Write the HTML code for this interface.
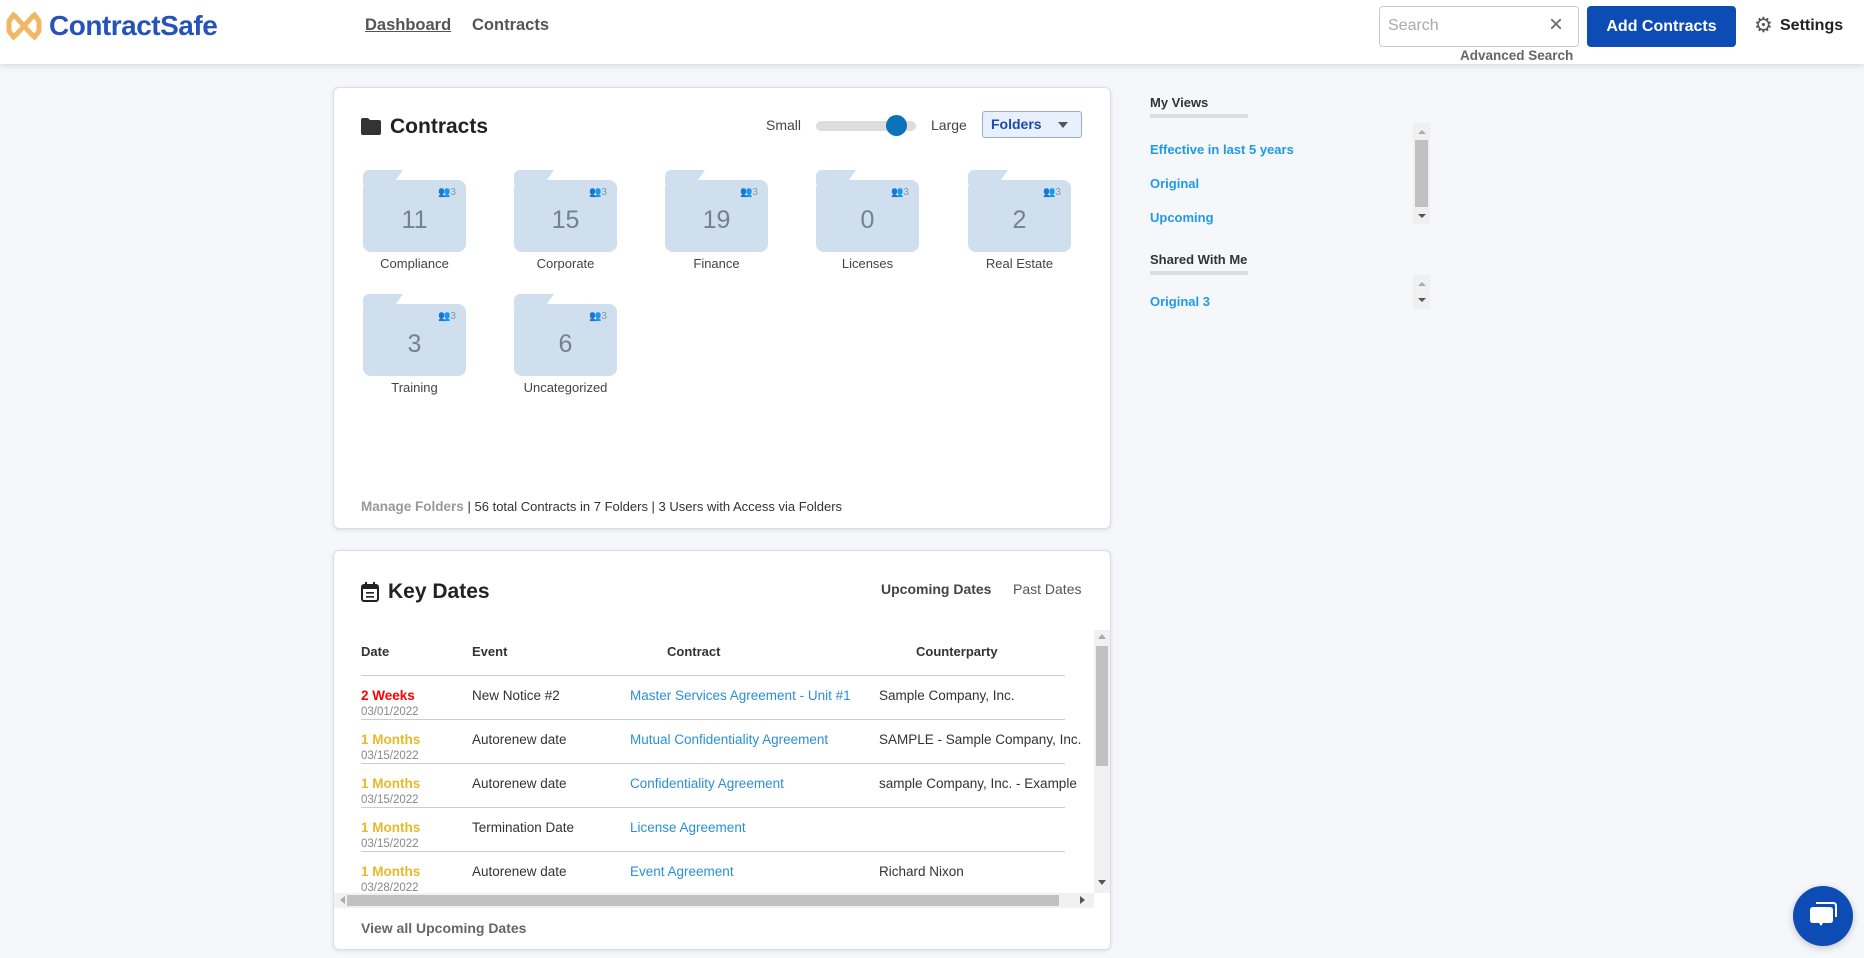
<!DOCTYPE html>
<html><head><meta charset="utf-8"><style>
*{box-sizing:border-box;margin:0;padding:0}
body{width:1864px;height:958px;overflow:hidden;background:#f6f7fb;font-family:"Liberation Sans",sans-serif;color:#333;position:relative}
.a{position:absolute;white-space:nowrap}
.hdr{position:absolute;left:0;top:0;width:1864px;height:64px;background:#fff;box-shadow:0 2px 6px rgba(0,0,0,.12)}
.card{position:absolute;background:#fff;border:1px solid #dcdde3;border-radius:6px;box-shadow:0 1px 4px rgba(0,0,0,.1)}
.fold{position:absolute;width:103px;height:82px}
.fold .tab{position:absolute;left:0;top:0;width:30px;height:14px;background:#cfdfed;border-radius:6px 0 0 0}
.fold .tab:after{content:"";position:absolute;right:-10px;top:0;border-left:10px solid #cfdfed;border-top:0;border-bottom:14px solid transparent;}
.fold .body{position:absolute;left:0;top:10px;width:103px;height:72px;background:#cfdfed;border-radius:8px}
.fold .n{position:absolute;left:0;width:103px;top:36px;text-align:center;font-size:25px;color:#76818c}
.fold .u{position:absolute;right:10px;top:17px;font-size:10px;color:#8a949e}
.lbl{position:absolute;width:151px;text-align:center;font-size:13px;color:#444}
.th{font-size:13px;font-weight:bold;color:#333}
.td{font-size:13.5px;color:#333}
.lnk{color:#2a8fd8}
.hl{position:absolute;left:361px;width:704px;height:1px;background:#ccc}
</style></head><body>
<div class="hdr"></div>
<svg class="a" style="left:6px;top:9px" width="36" height="34" viewBox="0 0 36 34"><g fill="none" stroke="#f0b865" stroke-width="5"><path d="M9 4 L3 12 L3 22 L9 30"/><path d="M27 4 L33 12 L33 22 L27 30"/><path d="M8 6 L28 28"/><path d="M28 6 L8 28"/></g></svg>
<div class="a" style="left:49px;top:10px;font-size:28px;font-weight:bold;color:#2553b8;letter-spacing:-0.5px">ContractSafe</div>
<div class="a" style="left:365px;top:16px;font-size:16.5px;font-weight:bold;color:#555;text-decoration:underline">Dashboard</div>
<div class="a" style="left:472px;top:16px;font-size:16.5px;font-weight:bold;color:#555">Contracts</div>
<div class="a" style="left:1379px;top:6px;width:200px;height:41px;border:1px solid #ccc;border-radius:4px;background:#fff"></div>
<div class="a" style="left:1388px;top:17px;font-size:16px;color:#aaa">Search</div>
<div class="a" style="left:1549px;top:11px;font-size:24px;color:#666">×</div>
<div class="a" style="left:1460px;top:48px;font-size:13.5px;font-weight:bold;color:#666">Advanced Search</div>
<div class="a" style="left:1587px;top:6px;width:149px;height:41px;background:#0d4bb5;border-radius:4px;color:#fff;font-size:16px;font-weight:bold;text-align:center;line-height:41px">Add Contracts</div>
<div class="a" style="left:1754px;top:13px;font-size:21px;color:#555">⚙</div>
<div class="a" style="left:1780px;top:17px;font-size:16px;font-weight:bold;color:#222">Settings</div>

<div class="card" style="left:333px;top:87px;width:778px;height:442px"></div>
<svg class="a" style="left:361px;top:118px" width="20" height="17" viewBox="0 0 20 17"><path d="M0 2 Q0 0 2 0 H7 L9 2 H18 Q20 2 20 4 V15 Q20 17 18 17 H2 Q0 17 0 15Z" fill="#333"/></svg>
<div class="a" style="left:390px;top:115px;font-size:21px;font-weight:bold;color:#222">Contracts</div>
<div class="a" style="left:766px;top:117px;font-size:14px;color:#444">Small</div>
<div class="a" style="left:816px;top:121px;width:100px;height:10px;background:#ddd;border-radius:5px"></div>
<div class="a" style="left:886px;top:115px;width:21px;height:21px;background:#0b73b8;border-radius:50%"></div>
<div class="a" style="left:931px;top:117px;font-size:14px;color:#444">Large</div>
<div class="a" style="left:982px;top:111px;width:100px;height:27px;background:#e8effd;border:1px solid #99acd0;border-radius:3px"></div>
<div class="a" style="left:991px;top:116px;font-size:14px;font-weight:bold;color:#1a4ab0">Folders</div>
<div class="a" style="left:1058px;top:122px;border-left:5px solid transparent;border-right:5px solid transparent;border-top:6px solid #555"></div>

<div class="fold" style="left:363px;top:170px"><div class="tab"></div><div class="body"></div><div class="u">👥3</div><div class="n">11</div></div>
<div class="fold" style="left:514px;top:170px"><div class="tab"></div><div class="body"></div><div class="u">👥3</div><div class="n">15</div></div>
<div class="fold" style="left:665px;top:170px"><div class="tab"></div><div class="body"></div><div class="u">👥3</div><div class="n">19</div></div>
<div class="fold" style="left:816px;top:170px"><div class="tab"></div><div class="body"></div><div class="u">👥3</div><div class="n">0</div></div>
<div class="fold" style="left:968px;top:170px"><div class="tab"></div><div class="body"></div><div class="u">👥3</div><div class="n">2</div></div>
<div class="fold" style="left:363px;top:294px"><div class="tab"></div><div class="body"></div><div class="u">👥3</div><div class="n">3</div></div>
<div class="fold" style="left:514px;top:294px"><div class="tab"></div><div class="body"></div><div class="u">👥3</div><div class="n">6</div></div>
<div class="lbl" style="left:339px;top:256px">Compliance</div>
<div class="lbl" style="left:490px;top:256px">Corporate</div>
<div class="lbl" style="left:641px;top:256px">Finance</div>
<div class="lbl" style="left:792px;top:256px">Licenses</div>
<div class="lbl" style="left:944px;top:256px">Real Estate</div>
<div class="lbl" style="left:339px;top:380px">Training</div>
<div class="lbl" style="left:490px;top:380px">Uncategorized</div>
<div class="a" style="left:361px;top:499px;font-size:13.5px;color:#999;font-weight:bold">Manage Folders <span style="font-weight:normal;color:#333;font-size:13px">| 56 total Contracts in 7 Folders | 3 Users with Access via Folders</span></div>

<div class="card" style="left:333px;top:550px;width:778px;height:400px"></div>
<svg class="a" style="left:361px;top:582px" width="18" height="20" viewBox="0 0 18 20"><rect x="1" y="3" width="16" height="16" rx="2" fill="none" stroke="#222" stroke-width="2"/><rect x="1" y="3" width="16" height="4" fill="#222"/><rect x="4" y="0" width="2" height="4" fill="#222"/><rect x="12" y="0" width="2" height="4" fill="#222"/><rect x="5" y="10" width="8" height="1.6" fill="#222"/><rect x="5" y="14" width="8" height="1.6" fill="#222"/></svg>
<div class="a" style="left:388px;top:580px;font-size:21px;font-weight:bold;color:#222">Key Dates</div>
<div class="a" style="left:881px;top:581px;font-size:14px;font-weight:bold;color:#444">Upcoming Dates</div>
<div class="a" style="left:1013px;top:581px;font-size:14px;color:#555">Past Dates</div>
<div class="a th" style="left:361px;top:644px">Date</div>
<div class="a th" style="left:472px;top:644px">Event</div>
<div class="a th" style="left:667px;top:644px">Contract</div>
<div class="a th" style="left:916px;top:644px">Counterparty</div>
<div class="hl" style="top:675px"></div>
<div class="hl" style="top:719px"></div>
<div class="hl" style="top:763px"></div>
<div class="hl" style="top:807px"></div>
<div class="hl" style="top:851px"></div>

<div class="a" style="left:361px;top:688px;font-size:13.5px;font-weight:bold;color:#f00">2 Weeks</div>
<div class="a" style="left:361px;top:706px;font-size:11.5px;color:#888">03/01/2022</div>
<div class="a td" style="left:472px;top:688px">New Notice #2</div>
<div class="a td lnk" style="left:630px;top:688px">Master Services Agreement - Unit #1</div>
<div class="a td" style="left:879px;top:688px">Sample Company, Inc.</div>

<div class="a" style="left:361px;top:732px;font-size:13.5px;font-weight:bold;color:#e8b92b">1 Months</div>
<div class="a" style="left:361px;top:750px;font-size:11.5px;color:#888">03/15/2022</div>
<div class="a td" style="left:472px;top:732px">Autorenew date</div>
<div class="a td lnk" style="left:630px;top:732px">Mutual Confidentiality Agreement</div>
<div class="a td" style="left:879px;top:732px">SAMPLE - Sample Company, Inc.</div>

<div class="a" style="left:361px;top:776px;font-size:13.5px;font-weight:bold;color:#e8b92b">1 Months</div>
<div class="a" style="left:361px;top:794px;font-size:11.5px;color:#888">03/15/2022</div>
<div class="a td" style="left:472px;top:776px">Autorenew date</div>
<div class="a td lnk" style="left:630px;top:776px">Confidentiality Agreement</div>
<div class="a td" style="left:879px;top:776px">sample Company, Inc. - Example</div>

<div class="a" style="left:361px;top:820px;font-size:13.5px;font-weight:bold;color:#e8b92b">1 Months</div>
<div class="a" style="left:361px;top:838px;font-size:11.5px;color:#888">03/15/2022</div>
<div class="a td" style="left:472px;top:820px">Termination Date</div>
<div class="a td lnk" style="left:630px;top:820px">License Agreement</div>

<div style="position:absolute;left:334px;top:850px;width:760px;height:43px;overflow:hidden">
<div class="a" style="left:27px;top:14px;font-size:13.5px;font-weight:bold;color:#e8b92b">1 Months</div>
<div class="a" style="left:27px;top:32px;font-size:11.5px;color:#888">03/28/2022</div>
<div class="a td" style="left:138px;top:14px">Autorenew date</div>
<div class="a td lnk" style="left:296px;top:14px">Event Agreement</div>
<div class="a td" style="left:545px;top:14px">Richard Nixon</div>
</div>
<div class="a" style="left:1094px;top:630px;width:16px;height:263px;background:#f1f1f1"></div>
<div class="a" style="left:1096px;top:646px;width:12px;height:120px;background:#c1c1c1"></div>
<div class="a" style="left:1098px;top:634px;border-left:4px solid transparent;border-right:4px solid transparent;border-bottom:5px solid #aaa"></div>
<div class="a" style="left:1098px;top:880px;border-left:4px solid transparent;border-right:4px solid transparent;border-top:5px solid #555"></div>
<div class="a" style="left:334px;top:893px;width:760px;height:15px;background:#f1f1f1"></div>
<div class="a" style="left:347px;top:895px;width:712px;height:11px;background:#c1c1c1"></div>
<div class="a" style="left:1080px;top:896px;border-top:4px solid transparent;border-bottom:4px solid transparent;border-left:5px solid #555"></div>
<div class="a" style="left:340px;top:896px;border-top:4px solid transparent;border-bottom:4px solid transparent;border-right:5px solid #aaa"></div>
<div class="a" style="left:361px;top:920px;font-size:14px;font-weight:bold;color:#666">View all Upcoming Dates</div>

<div class="a" style="left:1150px;top:95px;font-size:13px;font-weight:bold;color:#333">My Views</div>
<div class="a" style="left:1150px;top:114px;width:98px;height:4px;background:#ddd"></div>
<div class="a" style="left:1150px;top:142px;font-size:13px;font-weight:bold;color:#1e9ae6">Effective in last 5 years</div>
<div class="a" style="left:1150px;top:176px;font-size:13px;font-weight:bold;color:#1e9ae6">Original</div>
<div class="a" style="left:1150px;top:210px;font-size:13px;font-weight:bold;color:#1e9ae6">Upcoming</div>
<div class="a" style="left:1413px;top:123px;width:17px;height:101px;background:#f0f0f0"></div>
<div class="a" style="left:1415px;top:140px;width:13px;height:67px;background:#c1c1c1"></div>
<div class="a" style="left:1418px;top:130px;border-left:4px solid transparent;border-right:4px solid transparent;border-bottom:4px solid #aaa"></div>
<div class="a" style="left:1418px;top:214px;border-left:4px solid transparent;border-right:4px solid transparent;border-top:4px solid #555"></div>
<div class="a" style="left:1150px;top:252px;font-size:13px;font-weight:bold;color:#333">Shared With Me</div>
<div class="a" style="left:1150px;top:271px;width:98px;height:4px;background:#ddd"></div>
<div class="a" style="left:1150px;top:294px;font-size:13px;font-weight:bold;color:#1e9ae6">Original 3</div>
<div class="a" style="left:1413px;top:275px;width:17px;height:34px;background:#f0f0f0"></div>
<div class="a" style="left:1418px;top:282px;border-left:4px solid transparent;border-right:4px solid transparent;border-bottom:4px solid #aaa"></div>
<div class="a" style="left:1418px;top:298px;border-left:4px solid transparent;border-right:4px solid transparent;border-top:4px solid #555"></div>

<div class="a" style="left:1793px;top:886px;width:60px;height:60px;background:#0d4bb5;border-radius:50%;box-shadow:0 2px 8px rgba(0,0,0,.2)"></div>
<svg class="a" style="left:1808px;top:900px" width="30" height="30" viewBox="0 0 30 30"><path d="M8 3 H25 Q28 3 28 6 V17" fill="none" stroke="#fff" stroke-width="2"/><path d="M5 7 H22 Q25 7 25 10 V20 Q25 23 22 23 H15 L13 26 L11 23 H5 Q2 23 2 20 V10 Q2 7 5 7Z" fill="#fff"/></svg>
</body></html>
